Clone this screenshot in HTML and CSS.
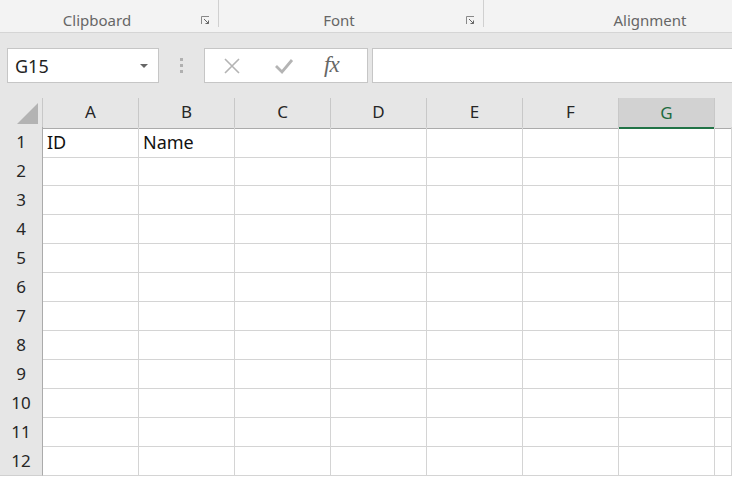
FILE: index.html
```html
<!DOCTYPE html>
<html lang="en">
<head>
    <meta charset="UTF-8">
    <meta name="viewport" content="width=device-width, initial-scale=1.0">
    <title>Book1 - Excel</title>
    <link rel="stylesheet" href="styles.css">
</head>
<body>
    <div class="ribbon">
        <div class="group clipboard">
            <span>Clipboard</span>
            <svg class="launcher" width="9" height="9" viewBox="0 0 9 9"><path d="M0.5 8V0.5H8" fill="none" stroke="#888"/><path d="M3 3L7.5 7.5M4.5 7.5H7.5V4.5" fill="none" stroke="#666"/></svg>
        </div>
        <div class="group font">
            <span>Font</span>
            <svg class="launcher" width="9" height="9" viewBox="0 0 9 9"><path d="M0.5 8V0.5H8" fill="none" stroke="#888"/><path d="M3 3L7.5 7.5M4.5 7.5H7.5V4.5" fill="none" stroke="#666"/></svg>
        </div>
        <div class="group alignment">
            <span>Alignment</span>
        </div>
    </div>

    <div class="formula-bar">
        <div class="name-box">
            <span>G15</span>
            <svg width="8" height="4" viewBox="0 0 8 4"><path d="M0 0H8L4 4Z" fill="#666"/></svg>
        </div>
        <div class="grip"><i></i><i></i><i></i></div>
        <div class="buttons">
            <svg width="18" height="18" viewBox="0 0 18 18"><path d="M2 2L16 16M16 2L2 16" stroke="#b4b4b4" stroke-width="1.6"/></svg>
            <svg width="20" height="18" viewBox="0 0 20 18"><path d="M2 9L8 15L18 3" fill="none" stroke="#b4b4b4" stroke-width="2.8"/></svg>
            <span class="fx">fx</span>
        </div>
        <div class="formula"></div>
    </div>

    <div class="sheet">
        <div class="corner"><svg width="22" height="22" viewBox="0 0 22 22"><path d="M21 0V21H0Z" fill="#b3b3b3"/></svg></div>
        <div class="col">A</div>
        <div class="col">B</div>
        <div class="col">C</div>
        <div class="col">D</div>
        <div class="col">E</div>
        <div class="col">F</div>
        <div class="col active">G</div>
        <div class="col"></div>
    </div>
    <div class="rows" id="rows"></div>

    <script>
        // twelve visible rows, first one holds the column titles
        let rows = document.getElementById("rows");
        let first = ["ID", "Name"];
        for (let r = 1; r <= 12; r++) {
            let line = document.createElement("div");
            line.className = "sheet";
            let head = document.createElement("div");
            head.className = "row-head";
            head.textContent = r;
            line.appendChild(head);
            for (let c = 0; c < 8; c++) {
                let cell = document.createElement("div");
                cell.className = "cell";
                if (r === 1 && first[c]) cell.textContent = first[c];
                line.appendChild(cell);
            }
            rows.appendChild(line);
        }
    </script>
</body>
</html>
```

FILE: styles.css
```css
body {
    margin: 0;
    width: 732px;
    height: 477px;
    overflow: hidden;
    background: #ffffff;
    font-family: "Noto Sans", "Open Sans", sans-serif;
}
.ribbon {
    display: flex;
    height: 32px;
    background: #f3f3f3;
    border-bottom: 1px solid #d5d5d5;
}
.group {
    position: relative;
    display: flex;
    justify-content: center;
    height: 27px;
    box-sizing: border-box;
    font-size: 15px;
    color: #666666;
    line-height: 40px;
}
.group span {
    height: 27px;
}
.clipboard {
    width: 219px;
    padding-right: 24px;
    border-right: 1px solid #d0d0d0;
}
.font {
    width: 265px;
    padding-right: 24px;
    border-right: 1px solid #d0d0d0;
}
.alignment {
    flex: 1;
    padding-left: 84px;
}
.launcher {
    position: absolute;
    right: 8px;
    top: 16px;
}
.formula-bar {
    display: flex;
    align-items: center;
    height: 65px;
    background: #e6e6e6;
    padding-left: 7px;
}
.name-box {
    display: flex;
    align-items: center;
    justify-content: space-between;
    width: 152px;
    height: 35px;
    box-sizing: border-box;
    background: #ffffff;
    border: 1px solid #c6c6c6;
    padding: 0 10px 0 7px;
    font-size: 18px;
    color: #222222;
}
.grip {
    display: flex;
    flex-direction: column;
    gap: 3px;
    width: 45px;
    align-items: center;
}
.grip i {
    width: 3px;
    height: 3px;
    background: #b0b0b0;
}
.buttons {
    display: flex;
    align-items: center;
    width: 164px;
    height: 35px;
    box-sizing: border-box;
    background: #ffffff;
    border: 1px solid #c6c6c6;
    padding-left: 18px;
    gap: 36px;
}
.buttons svg:nth-child(2) {
    margin-left: -3px;
    margin-right: -6px;
}
.fx {
    font-family: "Liberation Serif", "DejaVu Serif", serif;
    font-style: italic;
    font-size: 23px;
    color: #666666;
    letter-spacing: -1px;
    line-height: 1;
    margin-top: -3px;
}
.formula {
    flex: 1;
    height: 35px;
    box-sizing: border-box;
    margin-left: 4px;
    background: #ffffff;
    border: 1px solid #c6c6c6;
    border-right: none;
}
.sheet {
    display: grid;
    grid-template-columns: 43px repeat(7, 96px) 1fr;
    height: 29px;
}
.sheet > div {
    box-sizing: border-box;
}
.corner {
    background: #e6e6e6;
    border-right: 1px solid #c8c8c8;
    border-bottom: 1px solid #ababab;
    display: flex;
    justify-content: flex-end;
    align-items: flex-end;
    padding: 0 3px 3px 0;
}
.corner svg {
    display: block;
}
.col {
    background: #e6e6e6;
    border-right: 1px solid #c8c8c8;
    border-bottom: 1px solid #ababab;
    text-align: center;
    font-size: 17px;
    line-height: 28px;
    color: #262626;
}
.col.active {
    background: #d2d2d2;
    color: #1e6b41;
    border-bottom: 2px solid #217346;
    line-height: 29px;
}
.col:last-child {
    border-right: none;
}
.row-head {
    background: #e6e6e6;
    border-right: 1px solid #ababab;
    border-bottom: 1px solid #d0d0d0;
    text-align: center;
    font-size: 17px;
    line-height: 29px;
    color: #262626;
}
.cell {
    border-right: 1px solid #d4d4d4;
    border-bottom: 1px solid #d4d4d4;
    font-size: 18px;
    line-height: 30px;
    padding-left: 4px;
    color: #111111;
    white-space: nowrap;
}
```
